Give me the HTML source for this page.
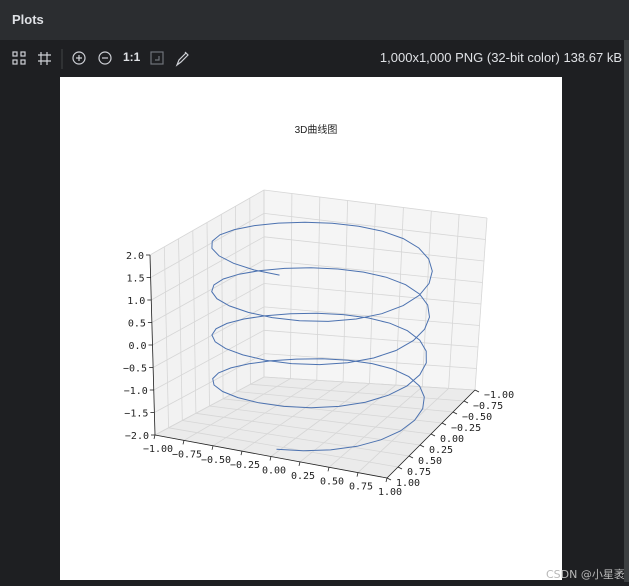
<!DOCTYPE html>
<html><head><meta charset="utf-8"><style>
body{margin:0;width:629px;height:586px;background:#1e1f22;overflow:hidden;position:relative;font-family:"Liberation Sans","Noto Sans CJK SC",sans-serif}
#hdr{position:absolute;left:0;top:0;width:629px;height:40px;background:#2b2d30;color:#dfe1e5;font-weight:bold;font-size:13px;line-height:40px;padding-left:12px;box-sizing:border-box}
#info{position:absolute;right:7px;top:50px;color:#dfe1e5;font-size:13px}
#img{position:absolute;left:60px;top:77px;width:502px;height:503px;background:#fff}
#wm{position:absolute;left:546px;top:566px;color:#b8b8b8;font-size:11px;font-family:"DejaVu Sans","Noto Sans CJK SC",sans-serif}
#sb{position:absolute;left:624px;top:40px;width:5px;height:542px;background:#3c3f41}
</style></head><body>
<div id="hdr">Plots</div>
<svg style="position:absolute;left:0;top:40px" width="200" height="37" fill="none" stroke="#ced0d6" stroke-width="1.2">
<rect x="13" y="12" width="4" height="4"/><rect x="21" y="12" width="4" height="4"/><rect x="13" y="20" width="4" height="4"/><rect x="21" y="20" width="4" height="4"/>
<path d="M41 12v13M47 12v13M38 15h13M38 21h13"/>
<path d="M62 9v20" stroke="#3c3f41"/>
<circle cx="79" cy="18" r="6"/><path d="M76 18h6M79 15v6"/>
<circle cx="105" cy="18" r="6"/><path d="M102 18h6"/>
<rect x="151" y="12" width="12" height="12" stroke="#6f737a"/><path d="M155 20h4v-4" stroke="#6f737a"/>
<path d="M177 25l2-5 7-7 2 2-7 7z M185 12l3 3"/>
</svg>
<div style="position:absolute;left:123px;top:50px;color:#dfe1e5;font-size:12px;font-weight:bold">1:1</div>
<div id="info">1,000x1,000 PNG (32-bit color) 138.67 kB</div>
<div id="img"></div>
<svg id="plot" style="position:absolute;left:0;top:0" width="629" height="586"></svg>
<div id="wm">CSDN @小星袤</div>
<div id="sb"></div>
<script>
var A=[264,377],B=[475,390],C=[387,478],D=[155,435];
var At=[264,190],Bt=[487,218],Ct=[397,310],Dt=[150,255];
function bl(a,b,c,d,u,v){return[(1-u)*(1-v)*a[0]+u*(1-v)*b[0]+u*v*c[0]+(1-u)*v*d[0],(1-u)*(1-v)*a[1]+u*(1-v)*b[1]+u*v*c[1]+(1-u)*v*d[1]];}
function P(x,y,z){var u=(x+1)/2,v=(y+1)/2,w=(z+2)/4;var p=bl(A,B,C,D,u,v),q=bl(At,Bt,Ct,Dt,u,v);return[p[0]+(q[0]-p[0])*w,p[1]+(q[1]-p[1])*w];}
var s='';
function poly(pts,fill){s+='<polygon points="'+pts.map(function(p){return p[0].toFixed(1)+','+p[1].toFixed(1)}).join(' ')+'" fill="'+fill+'" stroke="none"/>';}
function line(a,b,c,w){s+='<line x1="'+a[0].toFixed(1)+'" y1="'+a[1].toFixed(1)+'" x2="'+b[0].toFixed(1)+'" y2="'+b[1].toFixed(1)+'" stroke="'+c+'" stroke-width="'+(w||0.8)+'"/>';}
function txt(p,t,anchor){s+='<text x="'+p[0].toFixed(1)+'" y="'+p[1].toFixed(1)+'" font-size="10" fill="#222" text-anchor="'+(anchor||'middle')+'" font-family="DejaVu Sans Mono,Liberation Mono,monospace">'+t+'</text>';}
poly([P(-1,-1,-2),P(1,-1,-2),P(1,1,-2),P(-1,1,-2)],'#ebebeb');
poly([P(-1,1,-2),P(-1,-1,-2),P(-1,-1,2),P(-1,1,2)],'#f2f2f2');
poly([P(-1,-1,-2),P(1,-1,-2),P(1,-1,2),P(-1,-1,2)],'#f5f5f5');
var g='#d6d6d6';
for(var i=0;i<9;i++){var t=-1+i*0.25,z=-2+i*0.5;
 line(P(t,-1,-2),P(t,1,-2),g);line(P(-1,t,-2),P(1,t,-2),g);
 line(P(t,-1,-2),P(t,-1,2),g);line(P(-1,t,-2),P(-1,t,2),g);
 line(P(-1,-1,z),P(1,-1,z),g);line(P(-1,-1,z),P(-1,1,z),g);}
line(P(-1,1,-2),P(1,1,-2),'#222');line(P(1,1,-2),P(1,-1,-2),'#222');line(P(-1,1,-2),P(-1,1,2),'#222');
function lab(v){return (v<0?'\u2212':'')+Math.abs(v).toFixed(2);}
for(var i=0;i<9;i++){var t=-1+i*0.25,z=-2+i*0.5;
 var p=P(t,1,-2);line(p,[p[0]-1,p[1]+4],'#222');txt([p[0]+3,p[1]+17],lab(t));
 var q=P(1,t,-2);line(q,[q[0]+4,q[1]+2],'#222');txt([q[0]+9,q[1]+8],lab(t),'start');
 var r=P(-1,1,z);line(r,[r[0]-4,r[1]],'#222');txt([r[0]-6,r[1]+4],(z<0?'\u2212':'')+Math.abs(z).toFixed(1),'end');}
var d='';for(var k=0;k<100;k++){var th=-4*Math.PI+8*Math.PI*k/99,z=-2+4*k/99;var p=P(0.87*Math.sin(th)+0.04,0.88*Math.cos(th)-0.02,z);p[1]+=-3;d+=(k?'L':'M')+(p[0]-6).toFixed(1)+' '+p[1].toFixed(1);}
s+='<path d="'+d+'" fill="none" stroke="#4c72b0" stroke-width="1"/>';
s+='<text x="316" y="133" font-size="10" fill="#222" text-anchor="middle" font-family="Liberation Sans,Noto Sans CJK SC,sans-serif">3D曲线图</text>';
document.getElementById('plot').innerHTML=s;
</script>
</body></html>
